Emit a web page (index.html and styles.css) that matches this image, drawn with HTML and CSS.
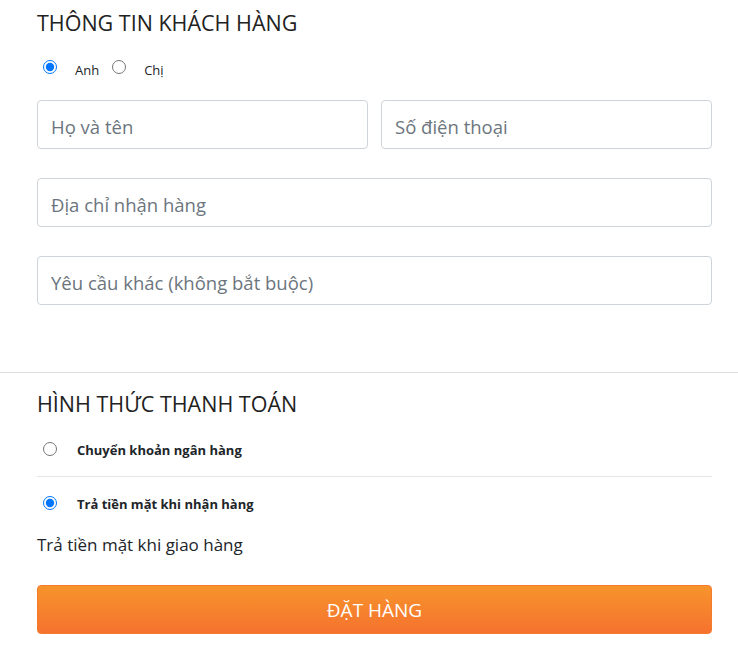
FILE: index.html
```html
<!DOCTYPE html>
<html lang="vi">
<head>
<meta charset="utf-8">
<link rel="stylesheet" href="styles.css">
</head>
<body>
<section class="info">
  <h2 class="title">THÔNG TIN KHÁCH HÀNG</h2>
  <div class="gender">
    <label class="g-opt"><input type="radio" name="g" checked> <span>Anh</span></label>
    <label class="g-opt"><input type="radio" name="g"> <span>Chị</span></label>
  </div>
  <div class="row two">
    <input class="field" type="text" placeholder="Họ và tên">
    <input class="field" type="text" placeholder="Số điện thoại">
  </div>
  <div class="row">
    <input class="field" type="text" placeholder="Địa chỉ nhận hàng">
  </div>
  <div class="row">
    <input class="field" type="text" placeholder="Yêu cầu khác (không bắt buộc)">
  </div>
</section>
<hr class="sep">
<section class="pay">
  <h2 class="title2">HÌNH THỨC THANH TOÁN</h2>
  <label class="p-opt p-first"><input type="radio" name="p"> <span>Chuyển khoản ngân hàng</span></label>
  <label class="p-opt p-last"><input type="radio" name="p" checked> <span>Trả tiền mặt khi nhận hàng</span></label>
  <p class="note">Trả tiền mặt khi giao hàng</p>
  <button class="order">ĐẶT HÀNG</button>
</section>
</body>
</html>
```
FILE: styles.css
```css
* { box-sizing: border-box; }
body {
  margin: 0;
  font-family: "Open Sans", "Noto Sans", sans-serif;
  color: #212529;
  background: #fff;
}
.info, .pay { padding: 0 26px 0 37px; }
.title {
  margin: 0;
  padding-top: 8px;
  font-size: 21.5px;
  font-weight: 400;
  line-height: 30px;
  color: #222;
}
.gender {
  display: flex;
  align-items: center;
  margin-top: 20px;
  font-size: 13px;
}
.g-opt { display: flex; align-items: center; margin-right: 7px; }
.g-opt input { margin: 0 18px 0 6px; width: 14px; height: 14px; }
.g-opt span { position: relative; top: 3px; }
.row { margin-top: 29px; display: flex; gap: 13px; }
.row.two { margin-top: 24px; }
.field {
  flex: 1;
  height: 49px;
  border: 1px solid #ced4da;
  border-radius: 4px;
  padding: 3px 13px 0;
  font-family: inherit;
  font-size: 18.5px;
  color: #495057;
}
.field::placeholder { color: #6c757d; }
.sep {
  margin: 67px 0 0;
  border: 0;
  border-top: 1px solid #ddd;
}
.title2 {
  margin: 0;
  padding-top: 16px;
  font-size: 21.5px;
  font-weight: 400;
  line-height: 30px;
  color: #222;
}
.p-opt {
  display: flex;
  align-items: center;
  height: 54px;
  font-size: 13px;
  font-weight: 700;
}
.p-first { margin-top: 4px; border-bottom: 1px solid #e5e5e5; }
.p-opt input { margin: 0 20px 0 6px; width: 14px; height: 14px; position: relative; top: -1px; }
.note { margin: 2px 0 0; font-size: 17px; line-height: 24px; }
.order {
  display: block;
  width: 100%;
  margin-top: 28px;
  height: 49px;
  border: 1px solid #f47a2e;
  border-radius: 4px;
  background: linear-gradient(#f7942b, #f5722f);
  color: #fff;
  font-family: inherit;
  font-size: 19px;
}
```
